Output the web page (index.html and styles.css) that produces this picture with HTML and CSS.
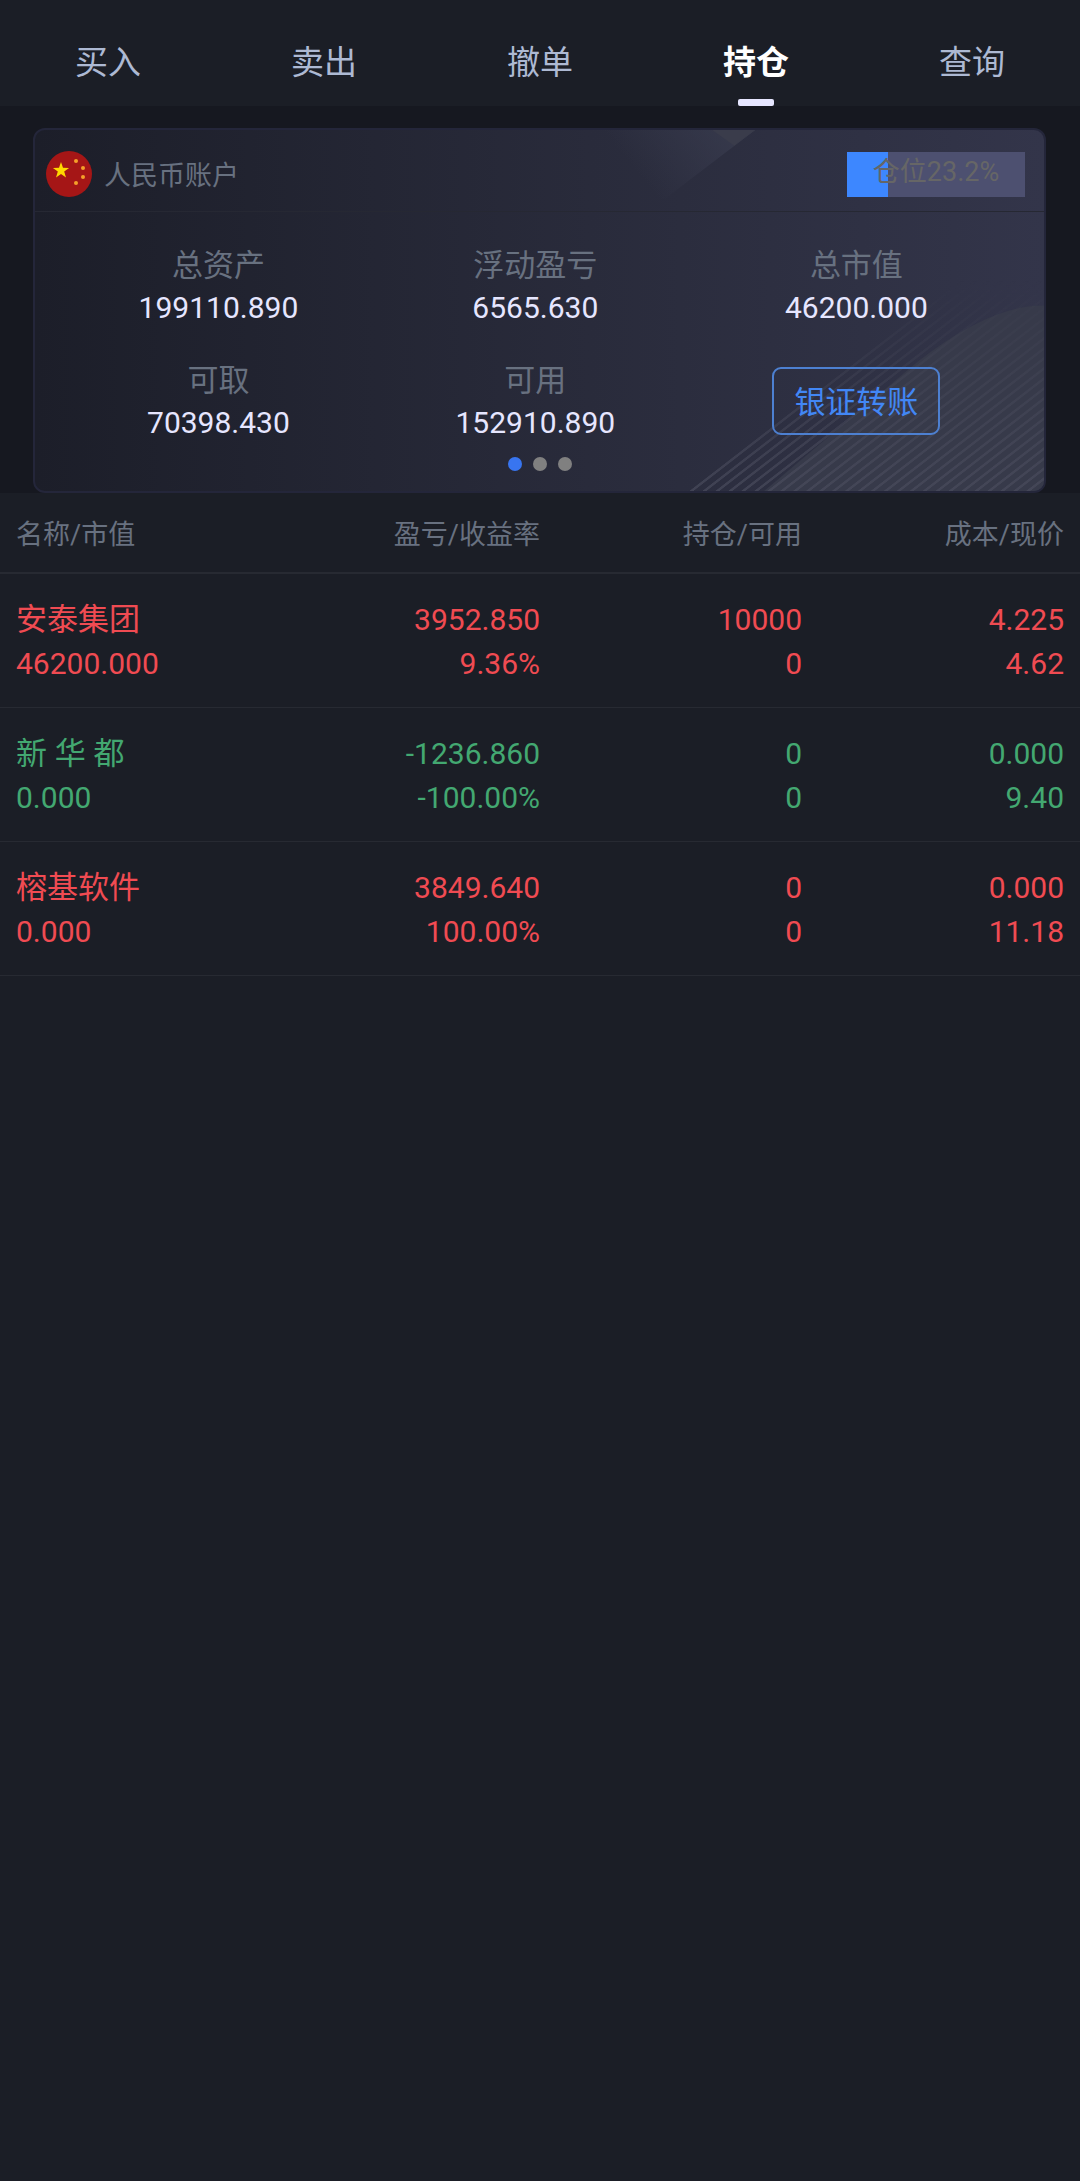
FILE: index.html
```html
<!DOCTYPE html>
<html lang="zh-CN">

<head>
    <meta charset="UTF-8">
    <meta name="viewport" content="width=device-width, initial-scale=1.0">
    <title>持仓</title>
    <link rel="stylesheet" href="styles.css">
</head>

<body>
    <nav class="tabs">
        <a href="#buy" class="tab">买入</a>
        <a href="#sell" class="tab">卖出</a>
        <a href="#cancel" class="tab">撤单</a>
        <a href="#hold" class="tab active">持仓</a>
        <a href="#query" class="tab">查询</a>
    </nav>

    <section class="account">
        <div class="card">
            <!-- card background pattern -->
            <svg class="card-bg" viewBox="0 0 1013 366" preserveAspectRatio="none" aria-hidden="true">
                <defs>
                    <linearGradient id="facet" x1="610" y1="50" x2="710" y2="-30" gradientUnits="userSpaceOnUse">
                        <stop offset="0" stop-color="#3a3d50" stop-opacity="0" />
                        <stop offset="1" stop-color="#3a3d50" stop-opacity="0.9" />
                    </linearGradient>
                    <pattern id="stripes" width="13" height="366" patternUnits="userSpaceOnUse" patternTransform="translate(657 366) skewX(-52)">
                        <rect width="4" height="366" fill="#4a4c5d" />
                    </pattern>
                    <linearGradient id="fade" x1="0" y1="1" x2="0" y2="0">
                        <stop offset="0" stop-color="#fff" stop-opacity="0.7" />
                        <stop offset="1" stop-color="#fff" stop-opacity="0" />
                    </linearGradient>
                    <mask id="stripes-mask">
                        <path d="M652 366L925 152H1013V366Z" fill="url(#fade)" />
                    </mask>
                </defs>
                <path d="M570 0H723L645 60L630 72Z" fill="url(#facet)" />
                <path d="M680 0H723L702 16Z" fill="#3a3c4b" />
                <path d="M732 366L886 235Q960 177 1013 178V366Z" fill="#373a4a" />
                <rect width="1013" height="366" fill="url(#stripes)" mask="url(#stripes-mask)" />
            </svg>

            <div class="card-head">
                <svg class="flag" viewBox="0 0 46 46" aria-hidden="true">
                    <circle cx="23" cy="23" r="23" fill="#a51616" />
                    <path d="M15 11l2 5.8 6.1.1-4.9 3.7 1.8 5.8-5-3.5-5 3.5 1.8-5.8-4.9-3.7 6.1-.1z" fill="#ffd800" />
                    <g fill="#f5a02a">
                        <circle cx="30" cy="10" r="2" />
                        <circle cx="37" cy="17" r="2" />
                        <circle cx="37" cy="26" r="2" />
                        <circle cx="30" cy="32" r="2" />
                    </g>
                </svg>
                <h1 class="card-title">人民币账户</h1>
                <div class="position">
                    <div class="position-fill" style="width: 23.2%"></div>
                    <span class="position-text">仓位23.2%</span>
                </div>
            </div>

            <div class="stats">
                <div class="stat">
                    <span class="stat-label">总资产</span>
                    <span class="stat-value">199110.890</span>
                </div>
                <div class="stat">
                    <span class="stat-label">浮动盈亏</span>
                    <span class="stat-value">6565.630</span>
                </div>
                <div class="stat">
                    <span class="stat-label">总市值</span>
                    <span class="stat-value">46200.000</span>
                </div>
                <div class="stat">
                    <span class="stat-label">可取</span>
                    <span class="stat-value">70398.430</span>
                </div>
                <div class="stat">
                    <span class="stat-label">可用</span>
                    <span class="stat-value">152910.890</span>
                </div>
                <div class="stat">
                    <button class="transfer" type="button">银证转账</button>
                </div>
            </div>

            <div class="dots">
                <span class="dot active"></span>
                <span class="dot"></span>
                <span class="dot"></span>
            </div>
        </div>
    </section>

    <table class="holdings">
        <thead>
            <tr>
                <th>名称/市值</th>
                <th>盈亏/收益率</th>
                <th>持仓/可用</th>
                <th>成本/现价</th>
            </tr>
        </thead>
        <tbody>
            <tr class="up">
                <td><span class="name">安泰集团</span><br>46200.000</td>
                <td>3952.850<br>9.36%</td>
                <td>10000<br>0</td>
                <td>4.225<br>4.62</td>
            </tr>
            <tr class="down">
                <td><span class="name">新 华 都</span><br>0.000</td>
                <td>-1236.860<br>-100.00%</td>
                <td>0<br>0</td>
                <td>0.000<br>9.40</td>
            </tr>
            <tr class="up">
                <td><span class="name">榕基软件</span><br>0.000</td>
                <td>3849.640<br>100.00%</td>
                <td>0<br>0</td>
                <td>0.000<br>11.18</td>
            </tr>
        </tbody>
    </table>
</body>

</html>
```

FILE: styles.css
```css
* {
    box-sizing: border-box;
}

body {
    margin: 0;
    min-height: 100vh;
    background-color: #1b1e26;
    font-family: Roboto, "Noto Sans CJK SC", sans-serif;
    font-size: 30px;
}

.tabs {
    display: flex;
    height: 106px;
    padding-top: 18px;
}

.tab {
    position: relative;
    flex: 1;
    line-height: 90px;
    text-align: center;
    font-size: 33px;
    color: #adb9d3;
    text-decoration: none;
}

.tab.active {
    color: #fff;
    font-weight: bold;
}

.tab.active::after {
    content: "";
    position: absolute;
    left: 50%;
    bottom: 0;
    width: 36px;
    height: 7px;
    margin-left: -18px;
    border-radius: 2px;
    background-color: #e6e6ff;
}

.account {
    padding: 22px 34px 0 33px;
    background-color: #161820;
}

.card {
    position: relative;
    overflow: hidden;
    border: 2px solid #24263a;
    border-radius: 12px;
    background: linear-gradient(to right, #1c1e29, #292b3b 55%, #33354a);
}

.card-bg {
    position: absolute;
    top: 0;
    left: 0;
    width: 100%;
    height: 100%;
}

.card-head {
    position: relative;
    display: flex;
    align-items: center;
    height: 82px;
    padding: 7px 19px 0 11px;
    border-bottom: 1px solid #262833;
}

.flag {
    width: 46px;
    height: 46px;
}

.card-title {
    margin: 0 auto 0 12px;
    padding-bottom: 2px;
    font-size: 27px;
    font-weight: normal;
    color: #687180;
}

.position {
    position: relative;
    width: 178px;
    height: 45px;
    background-color: #4d5070;
}

.position-fill {
    height: 100%;
    background-color: #3d87ff;
}

.position-text {
    position: absolute;
    top: 0;
    left: 0;
    width: 100%;
    line-height: 40px;
    text-align: center;
    font-size: 27px;
    color: #666;
}

.stats {
    position: relative;
    display: grid;
    grid-template-columns: auto auto auto;
    row-gap: 30px;
    padding: 32px 25px 0;
}

.stat {
    display: flex;
    flex-direction: column;
    align-items: center;
    line-height: 42px;
}

.stat-label {
    line-height: 43px;
    font-size: 31px;
    color: #687180;
}

.stat-value {
    color: #e6e6ff;
}

.transfer {
    width: 168px;
    height: 68px;
    margin-top: 8px;
    padding: 0 0 3px;
    border: 2px solid #4d80d1;
    border-radius: 9px;
    background: none;
    font-family: inherit;
    font-size: 31px;
    color: #4287f5;
}

.dots {
    position: relative;
    display: flex;
    justify-content: center;
    gap: 11px;
    padding: 13px 0 20px;
}

.dot {
    width: 14px;
    height: 14px;
    border-radius: 50%;
    background-color: #808080;
}

.dot.active {
    background-color: #3875f0;
}

.holdings {
    display: block;
}

.holdings thead,
.holdings tbody {
    display: block;
}

.holdings tr {
    display: grid;
    grid-template-columns: repeat(4, 1fr);
    padding: 24px 16px 21px;
    border-bottom: 1px solid #272a32;
}

.holdings thead tr {
    padding: 22px 16px 17px;
    border-bottom-width: 2px;
}

.holdings th,
.holdings td {
    padding: 0;
    text-align: right;
    line-height: 44px;
}

.holdings th {
    line-height: 40px;
    font-size: 27px;
    font-weight: normal;
    color: #687180;
}

.holdings th:first-child,
.holdings td:first-child {
    text-align: left;
}

.name {
    font-size: 31px;
}

.up {
    color: #f04b52;
}

.down {
    color: #43a871;
}
```
